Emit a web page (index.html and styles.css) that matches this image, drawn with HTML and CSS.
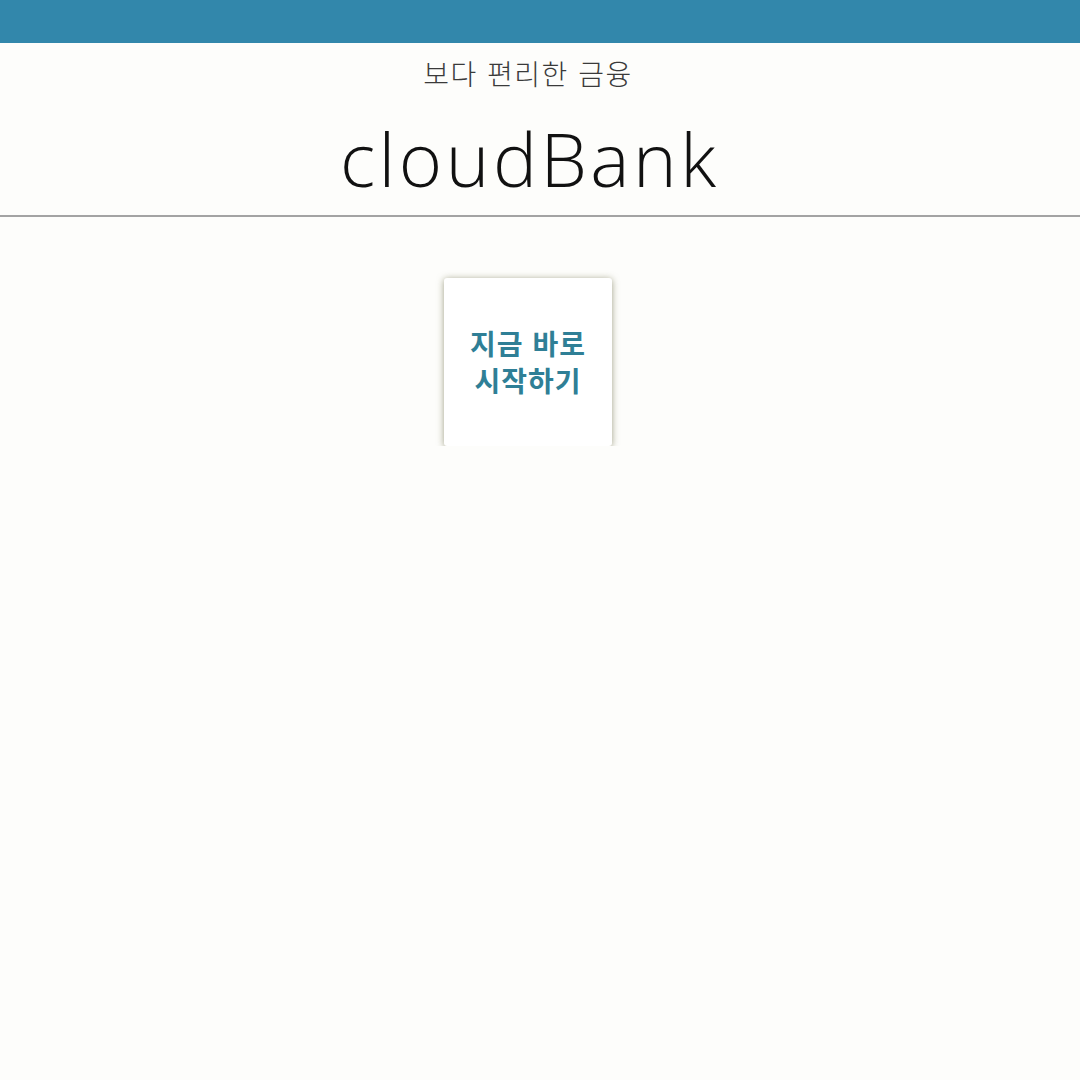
FILE: index.html
```html
<!DOCTYPE html>
<html lang="ko">
<head>
<meta charset="utf-8">
<title>cloudBank</title>
<link rel="stylesheet" href="styles.css">
</head>
<body>
<header class="topbar"></header>
<section class="hero">
  <p class="tagline">보다 편리한 금융</p>
  <h1 class="brand">cloudBank</h1>
</section>
<hr class="divider">
<main class="content">
  <a class="start-card" href="#">지금 바로<br>시작하기</a>
</main>
</body>
</html>
```
FILE: styles.css
```css
html, body {
  margin: 0;
  padding: 0;
  background: #fdfdfb;
}
body {
  font-family: "Noto Sans CJK KR", "Noto Sans", sans-serif;
}
.topbar {
  height: 43px;
  background: #3287ab;
}
.hero {
  display: flex;
  flex-direction: column;
  align-items: center;
  padding-right: 24px;
}
.tagline {
  margin: 12px 0 0;
  font-size: 28px;
  line-height: 36px;
  letter-spacing: 1.5px;
  color: #3a3a3a;
  font-weight: 300;
}
.brand {
  margin: 18px 0 0;
  font-family: "Open Sans", sans-serif;
  font-weight: 300;
  font-size: 74px;
  line-height: 100px;
  letter-spacing: 3.5px;
  text-indent: 3.5px;
  color: #111;
}
.divider {
  margin: 6px 0 0;
  border: 0;
  height: 2px;
  background: #a3a3a3;
}
.content {
  display: flex;
  justify-content: center;
  padding: 61px 24px 0 0;
}
.start-card {
  width: 168px;
  height: 168px;
  display: flex;
  align-items: center;
  justify-content: center;
  text-align: center;
  box-sizing: border-box;
  background: #fff;
  border-radius: 3px;
  box-shadow: 0 1px 7px rgba(110, 110, 70, 0.65);
  color: #2f7f96;
  font-weight: 700;
  font-size: 28px;
  line-height: 37px;
  letter-spacing: 1px;
  text-decoration: none;
}
```
